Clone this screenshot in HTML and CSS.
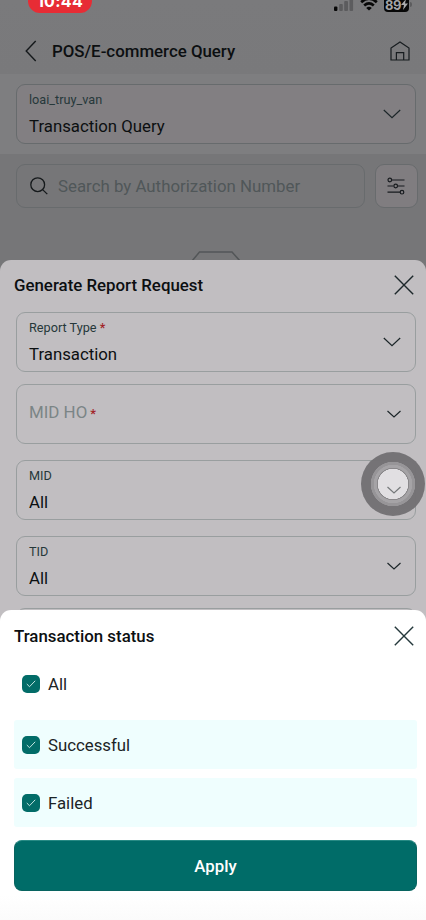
FILE: index.html
```html
<!DOCTYPE html>
<html lang="en">
<head>
<meta charset="utf-8">
<meta name="viewport" content="width=device-width, initial-scale=1">
<title>POS/E-commerce Query</title>
<link rel="stylesheet" href="styles.css">
</head>
<body>
<div class="phone">
  <main class="screen">
    <div class="top">
      <div class="status">
        <span class="clock">10:44</span>
        <div class="status-icons">
          <svg width="20" height="15" viewBox="0 0 20 15"><rect x="0" y="10.500" width="3.400" height="4.500" rx="1" fill="#080808"/><g fill="#5c5c5e"><rect x="5.200" y="8" width="3.600" height="7" rx="1"/><rect x="10.200" y="5" width="3.800" height="10" rx="1"/><rect x="15.500" y="1" width="3.600" height="14" rx="1"/></g></svg>
          <svg width="18" height="15" viewBox="0 0 18 15" fill="none" stroke="#080808" stroke-width="2.700"><path d="M1.200 6.200Q9-.8 16.800 6.200M4.200 9.500Q9 5.300 13.800 9.500"/><path d="M9 14.600 6.200 11.900Q9 9.700 11.800 11.900Z" fill="#080808" stroke="none"/></svg>
          <span class="battery"><span class="level">89</span><svg class="bolt" width="7" height="11" viewBox="0 0 7 11"><path d="M5 0 0 6h3L2 11l5-6.500H4z" fill="#aaaaac"/></svg></span>
        </div>
      </div>
      <header class="nav">
        <svg width="12" height="22" viewBox="0 0 12 22" fill="none" stroke="#15191b" stroke-width="1.400"><path d="M10.700 1 1.200 11l9.500 10"/></svg>
        <h1>POS/E-commerce Query</h1>
        <svg width="20" height="20" viewBox="0 0 20 20" fill="none" stroke="#171c1f" stroke-width="1.200"><path d="M1 19V7L10 .9 19 7v12ZM6.400 19v-7.400h7.300V19"/></svg>
      </header>
    </div>
    <section class="query">
      <div class="field dim">
        <div><span class="label">loai_truy_van</span><span class="value">Transaction Query</span></div>
        <svg class="chev" width="18" height="10" viewBox="0 0 18 10"><path d="M.8 1 9 8.700 17.200 1"/></svg>
      </div>
    </section>
    <section class="search-row">
      <div class="search">
        <svg width="18" height="18" viewBox="0 0 18 18" fill="none" stroke="#15191b" stroke-width="1.300"><circle cx="7.700" cy="7.700" r="6.900"/><path d="m12.600 12.600 4.700 4.500"/></svg>
        <span>Search by Authorization Number</span>
      </div>
      <div class="filter">
        <svg width="18" height="18" viewBox="0 0 18 18" fill="none" stroke="#171b1e" stroke-width="1.200"><path d="M5 3h12.500M.5 9h6M10.500 9h7M.5 15.200h12.500"/><circle cx="2.800" cy="3" r="1.800"/><circle cx="8.700" cy="9" r="1.800"/><circle cx="15" cy="15.200" r="1.800"/></svg>
      </div>
    </section>
    <svg class="empty" width="48" height="12" viewBox="0 0 48 12" fill="none" stroke="#535658" stroke-width="1.500"><path d="M0 10 7.500 1h32.500L48 10"/></svg>
  </main>

  <section class="sheet report">
    <div class="sheet-head">
      <h2>Generate Report Request</h2>
      <svg width="20" height="20" viewBox="0 0 20 20" fill="none" stroke="#1d282b" stroke-width="1.400"><path d="m.8.8 18.400 18.400M19.200.8.8 19.200"/></svg>
    </div>
    <div class="fields">
      <div class="field first">
        <div><span class="label">Report Type <b>*</b></span><span class="value">Transaction</span></div>
        <svg class="chev" width="18" height="10" viewBox="0 0 18 10"><path d="M.8 1 9 8.700 17.200 1"/></svg>
      </div>
      <div class="field">
        <span class="placeholder">MID HO<b>*</b></span>
        <svg class="chev" width="14" height="8" viewBox="0 0 14 8"><path d="M.5 1 7 6.900 13.500 1"/></svg>
      </div>
      <div class="field">
        <div><span class="label">MID</span><span class="value">All</span></div>
        <span class="touch"><svg class="chev" width="14" height="8" viewBox="0 0 14 8"><path d="M.5 1 7 6.900 13.500 1"/></svg></span>
      </div>
      <div class="field">
        <div><span class="label">TID</span><span class="value">All</span></div>
        <svg class="chev" width="14" height="8" viewBox="0 0 14 8"><path d="M.5 1 7 6.900 13.500 1"/></svg>
      </div>
      <div class="field last"></div>
    </div>
  </section>

  <section class="sheet picker">
    <div class="sheet-head">
      <h2>Transaction status</h2>
      <svg width="20" height="20" viewBox="0 0 20 20" fill="none" stroke="#24383b" stroke-width="1.400"><path d="m.8.8 18.400 18.400M19.200.8.8 19.200"/></svg>
    </div>
    <div class="options">
      <div class="option all"><span class="check"><svg width="10" height="8" viewBox="0 0 10 8"><path d="m.8 4 2.700 2.700L9.200.8"/></svg></span><span>All</span></div>
      <div class="option tinted"><span class="check"><svg width="10" height="8" viewBox="0 0 10 8"><path d="m.8 4 2.700 2.700L9.200.8"/></svg></span><span>Successful</span></div>
      <div class="option tinted"><span class="check"><svg width="10" height="8" viewBox="0 0 10 8"><path d="m.8 4 2.700 2.700L9.200.8"/></svg></span><span>Failed</span></div>
    </div>
    <button class="apply">Apply</button>
  </section>
</div>
</body>
</html>
```
FILE: styles.css
```css
* { box-sizing: border-box; }
body { margin: 0; font-family: Roboto, "Liberation Sans", sans-serif; color: #0c0f11; }
svg { display: block; flex: none; }
h1, h2 { margin: 0; font-size: 16.85px; line-height: 20px; font-weight: 500; }
.phone { position: relative; width: 426px; height: 920px; overflow: hidden; background: #767678; }
.top { height: 74px; background: linear-gradient(#7a7a7c, #79797b); }
.status { height: 29px; display: flex; justify-content: space-between; align-items: flex-start; padding: 0 17px 0 28px; }
.clock { width: 64px; height: 25px; margin-top: -12px; border-radius: 12px; background: #e72c35; color: #fff; font: 700 16px/26px Inter, sans-serif; text-align: center; letter-spacing: .3px; }
.status-icons { display: flex; align-items: flex-start; gap: 6px; margin-top: -4px; }
.battery { position: relative; width: 25px; height: 16px; border-radius: 4px; background: #080808; color: #a5a5a7; font: 700 13px/18px Inter, sans-serif; display: flex; padding-left: 1px; letter-spacing: -.5px; align-items: flex-start; }
.battery::after { content: ""; position: absolute; left: 26px; top: 6px; width: 2px; height: 5px; border-radius: 0 2px 2px 0; background: #5c5c5e; }
.bolt { margin-top: 3px; }
.nav { height: 45px; display: flex; align-items: center; padding: 0 16px 1px 25px; }
.nav h1 { flex: 1; margin-left: 15px; }
.query { height: 80px; padding: 10px 10px 0 16px; background: #7e7e80; }
.field { height: 60px; border: 1px solid #999e9f; border-radius: 9px; padding: 0 14px 0 12px; display: flex; align-items: center; justify-content: space-between; }
.field.dim { background: #827f82; border-color: #676b6d; }
.chev { fill: none; stroke: #1c2629; stroke-width: 1.200; }
.label { display: block; margin-top: -1px; font-size: 12.7px; line-height: 18px; color: #26383a; }
.value { display: block; margin-top: 6px; font-size: 16.8px; line-height: 22px; }
.field b { font-weight: 500; color: #a12428; }
.placeholder { font-size: 16.9px; line-height: 20px; color: #7b8586; padding-bottom: 2px; }
.placeholder b { margin-left: 3px; font-size: 13px; }
.search-row { display: flex; gap: 10px; padding: 10px 8px 0 16px; }
.search { width: 349px; height: 44px; border: 1px solid #686b6d; border-radius: 9px; display: flex; align-items: center; gap: 10px; padding-left: 13px; font-size: 16.85px; color: #505759; white-space: nowrap; }
.filter { width: 43px; height: 44px; border: 1px solid #686b6d; border-radius: 9px; background: #807d80; display: flex; align-items: center; padding-left: 11px; }
.empty { margin: 43px 0 0 192px; }
.sheet { position: absolute; left: 0; width: 426px; border-radius: 11px 11px 0 0; }
.sheet-head { display: flex; align-items: center; justify-content: space-between; height: 52px; padding: 0 12px 1px 14px; }
.report .sheet-head { padding-bottom: 2px; }
.report { top: 260px; height: 370px; background: #c1bec1; overflow: hidden; }
.fields { display: flex; flex-direction: column; gap: 16px; padding: 0 10px 0 16px; }
.field.first { margin-bottom: -4px; }
.field.last { margin-top: -4px; }
.touch { flex: none; display: grid; place-items: center; width: 64px; height: 64px; margin: -12px -24px 0 0; border-radius: 50%; padding: 11px 0 0 2px; background: radial-gradient(circle, #e2e0e3 15px, #89878a 15.500px 16px, #a5a3a6 16.500px 19px, #969497 19.500px 22px, #747275 22.500px); opacity: .98; }
.touch .chev { stroke: #747779; }
.picker { top: 610px; height: 310px; background: linear-gradient(#fff 92%, #fbfbfb); }
.options { padding: 0 9px 0 14px; }
.option { height: 49px; display: flex; align-items: center; gap: 8px; padding: 1px 0 0 8px; font-size: 16.8px; color: #1c2426; }
.option.all { margin-bottom: 9px; padding-bottom: 6px; }
.option.tinted { border-radius: 3px; background: #effefe; }
.option.tinted + .tinted { margin-top: 9px; }
.check { width: 18px; height: 18px; border-radius: 5px; background: #026c68; display: grid; place-items: center; }
.check path { fill: none; stroke: #c4e5e1; stroke-width: 1; }
.apply { display: block; width: 403px; height: 51px; margin: 13px 0 0 14px; padding: 0; border: 1px solid #086460; border-top-color: #278a84; border-radius: 8px; background: #006c68; color: #fff; font: 500 16.8px/20px Roboto, sans-serif; }
```
